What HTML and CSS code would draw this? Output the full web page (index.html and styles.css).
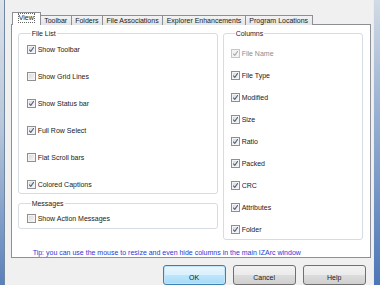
FILE: index.html
```html
<!DOCTYPE html>
<html lang="en">
<head>
  <meta charset="UTF-8" />
  <title>IZArc Options - View</title>
  <link rel="stylesheet" href="styles.css">
</head>
<body>
  <div class="frame-left"></div>

  <div class="dialog">
    <div class="tabs">
      <div class="tab active"><span class="focus">View</span></div>
      <div class="tab">Toolbar</div>
      <div class="tab">Folders</div>
      <div class="tab">File Associations</div>
      <div class="tab">Explorer Enhancements</div>
      <div class="tab">Program Locations</div>
    </div>

    <div class="panel">
      <div class="groups">
        <div class="left-col">
          <fieldset class="group file-list">
            <legend>File List</legend>
            <label class="check on">Show Toolbar</label>
            <label class="check">Show Grid Lines</label>
            <label class="check on">Show Status bar</label>
            <label class="check on">Full Row Select</label>
            <label class="check">Flat Scroll bars</label>
            <label class="check on">Colored Captions</label>
          </fieldset>

          <fieldset class="group messages">
            <legend>Messages</legend>
            <label class="check">Show Action Messages</label>
          </fieldset>
        </div>

        <fieldset class="group columns">
          <legend>Columns</legend>
          <label class="check on disabled">File Name</label>
          <label class="check on">File Type</label>
          <label class="check on">Modified</label>
          <label class="check on">Size</label>
          <label class="check on">Ratio</label>
          <label class="check on">Packed</label>
          <label class="check on">CRC</label>
          <label class="check on">Attributes</label>
          <label class="check on">Folder</label>
        </fieldset>
      </div>

      <p class="tip">Tip: you can use the mouse to resize and even hide columns in the main IZArc window</p>
    </div>

    <div class="buttons">
      <button class="default">OK</button>
      <button>Cancel</button>
      <button>Help</button>
    </div>
  </div>

  <div class="frame-right"></div>
</body>
</html>
```

FILE: styles.css
```css
body {
  margin: 0;
  width: 380px;
  height: 285px;
  overflow: hidden;
  display: flex;
  background: #f0f0f0;
  color: #1a1a1a;
  font-family: 'Liberation Sans', Arial, sans-serif;
  font-size: 7px;
  line-height: 9px;
}

/* window frame edges */
.frame-left {
  width: 4px;
  border-right: 1px solid #71869f;
  background: linear-gradient(#dde3ea, #b7c6da 45%, #5a80bb);
}

.frame-right {
  width: 7px;
  border-left: 1px solid #e6ecf3;
  background: linear-gradient(#d2dbe6, #9fb5d4 35%, #4c77b6);
}

.dialog {
  flex: 1;
  padding: 12px 2px 0 6px;
  display: flex;
  flex-direction: column;
}

/* tabs */
.tabs {
  display: flex;
  align-items: flex-end;
  padding-left: 1px;
  position: relative;
  z-index: 1;
  margin-bottom: -1px;
}

.tab {
  height: 9px;
  padding: 0 3.5px;
  border: 1px solid #8c8f96;
  border-bottom: none;
  margin-left: -1px;
  background: linear-gradient(#f3f3f3, #e4e4e4);
  white-space: nowrap;
  line-height: 9px;
}

.tab:first-child {
  margin-left: 0;
}

.tab.active {
  height: 12px;
  padding: 0 5px;
  background: #fff;
  line-height: 10px;
}

.focus {
  display: inline-block;
  padding: 0 1px;
  outline: 1px dotted #666;
  outline-offset: -1px;
  line-height: 10px;
}

/* tab page */
.panel {
  background: #fff;
  border: 1px solid #8c8f96;
  height: 240px;
  padding: 4px 7px 0 6px;
}

.groups {
  display: grid;
  grid-template-columns: 200px 140px;
  gap: 5px;
}

.group {
  margin: 0;
  padding: 0;
  border: 1px solid #d5dce3;
  border-radius: 3px;
  display: flex;
  flex-direction: column;
}

.group legend {
  margin-left: 4px;
  padding: 0 1px;
  line-height: 9px;
}

.file-list {
  gap: 16px;
  padding: 6px 0 3px 8px;
}

.messages {
  margin-top: 5px;
  padding: 5px 0 4px 8px;
}

.columns {
  gap: 11px;
  padding: 10px 0 4px 7px;
}

.check {
  display: flex;
  align-items: center;
  height: 11px;
}

.check::before {
  content: "";
  width: 7px;
  height: 7px;
  margin-right: 2px;
  border: 1px solid #8e8f8f;
  background: linear-gradient(135deg, #d8d8d8, #f7f7f7);
  box-shadow: inset 0 0 0 1px #f4f4f4;
  flex: none;
}

.check.on::before {
  background:
    url("data:image/svg+xml,%3Csvg xmlns='http://www.w3.org/2000/svg' viewBox='0 0 7 7'%3E%3Cpath d='M1.2 3.6 L2.8 5.4 L5.9 1' fill='none' stroke='%234a5f8c' stroke-width='1.1'/%3E%3C/svg%3E") center / 7px 7px no-repeat,
    linear-gradient(135deg, #d8d8d8, #f7f7f7);
}

.check.disabled {
  color: #8d8d8d;
}

.check.disabled::before {
  border-color: #c5c5c5;
  background:
    url("data:image/svg+xml,%3Csvg xmlns='http://www.w3.org/2000/svg' viewBox='0 0 7 7'%3E%3Cpath d='M1.2 3.6 L2.8 5.4 L5.9 1' fill='none' stroke='%23a8a8a8' stroke-width='1.1'/%3E%3C/svg%3E") center / 7px 7px no-repeat,
    #f2f2f2;
}

.tip {
  margin: 8px 0 0 15px;
  color: #2a3ad4;
}

/* dialog buttons */
.buttons {
  display: flex;
  justify-content: flex-end;
  gap: 7px;
  margin-top: 7px;
  padding-right: 5px;
}

button {
  width: 63px;
  height: 20px;
  padding: 4px 0 0;
  border: 1px solid #707070;
  border-radius: 3px;
  background: linear-gradient(#f2f2f2, #ebebeb 50%, #dddddd 50%, #cfcfcf);
  font-family: inherit;
  font-size: 7px;
  line-height: 9px;
  color: #1a1a1a;
  vertical-align: top;
}

button.default {
  border-color: #3c7fb1;
  background: linear-gradient(#eaf6fd, #d9f0fc 50%, #bee6fd 50%, #a7d9f5);
  box-shadow: inset 0 0 0 1px #c4e5f6;
}
```
